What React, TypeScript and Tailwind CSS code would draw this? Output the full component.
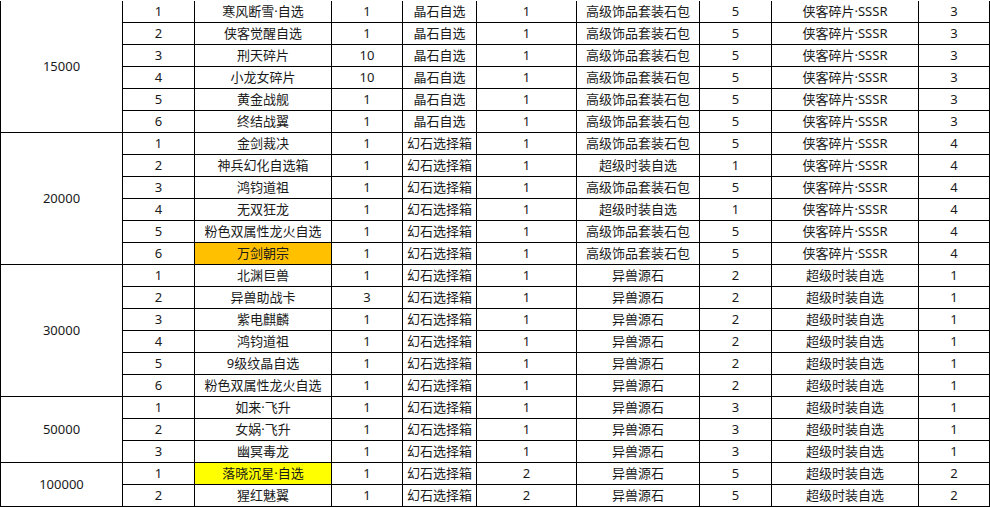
type Row = {
  no: number
  item: string
  qty: string
  a: string
  aq: string
  b: string
  bq: string
  c: string
  cq: string
  hl?: "orange" | "yellow"
}

type Group = { tier: string; rows: Row[] }

const r = (
  no: number,
  item: string,
  qty: string,
  a: string,
  aq: string,
  b: string,
  bq: string,
  c: string,
  cq: string,
  hl?: "orange" | "yellow",
): Row => ({ no, item, qty, a, aq, b, bq, c, cq, hl })

const groups: Group[] = [
  {
    tier: "15000",
    rows: [
      r(1, "寒风断雪·自选", "1", "晶石自选", "1", "高级饰品套装石包", "5", "侠客碎片·SSSR", "3"),
      r(2, "侠客觉醒自选", "1", "晶石自选", "1", "高级饰品套装石包", "5", "侠客碎片·SSSR", "3"),
      r(3, "刑天碎片", "10", "晶石自选", "1", "高级饰品套装石包", "5", "侠客碎片·SSSR", "3"),
      r(4, "小龙女碎片", "10", "晶石自选", "1", "高级饰品套装石包", "5", "侠客碎片·SSSR", "3"),
      r(5, "黄金战舰", "1", "晶石自选", "1", "高级饰品套装石包", "5", "侠客碎片·SSSR", "3"),
      r(6, "终结战翼", "1", "晶石自选", "1", "高级饰品套装石包", "5", "侠客碎片·SSSR", "3"),
    ],
  },
  {
    tier: "20000",
    rows: [
      r(1, "金剑裁决", "1", "幻石选择箱", "1", "高级饰品套装石包", "5", "侠客碎片·SSSR", "4"),
      r(2, "神兵幻化自选箱", "1", "幻石选择箱", "1", "超级时装自选", "1", "侠客碎片·SSSR", "4"),
      r(3, "鸿钧道祖", "1", "幻石选择箱", "1", "高级饰品套装石包", "5", "侠客碎片·SSSR", "4"),
      r(4, "无双狂龙", "1", "幻石选择箱", "1", "超级时装自选", "1", "侠客碎片·SSSR", "4"),
      r(5, "粉色双属性龙火自选", "1", "幻石选择箱", "1", "高级饰品套装石包", "5", "侠客碎片·SSSR", "4"),
      r(6, "万剑朝宗", "1", "幻石选择箱", "1", "高级饰品套装石包", "5", "侠客碎片·SSSR", "4", "orange"),
    ],
  },
  {
    tier: "30000",
    rows: [
      r(1, "北渊巨兽", "1", "幻石选择箱", "1", "异兽源石", "2", "超级时装自选", "1"),
      r(2, "异兽助战卡", "3", "幻石选择箱", "1", "异兽源石", "2", "超级时装自选", "1"),
      r(3, "紫电麒麟", "1", "幻石选择箱", "1", "异兽源石", "2", "超级时装自选", "1"),
      r(4, "鸿钧道祖", "1", "幻石选择箱", "1", "异兽源石", "2", "超级时装自选", "1"),
      r(5, "9级纹晶自选", "1", "幻石选择箱", "1", "异兽源石", "2", "超级时装自选", "1"),
      r(6, "粉色双属性龙火自选", "1", "幻石选择箱", "1", "异兽源石", "2", "超级时装自选", "1"),
    ],
  },
  {
    tier: "50000",
    rows: [
      r(1, "如来·飞升", "1", "幻石选择箱", "1", "异兽源石", "3", "超级时装自选", "1"),
      r(2, "女娲·飞升", "1", "幻石选择箱", "1", "异兽源石", "3", "超级时装自选", "1"),
      r(3, "幽冥毒龙", "1", "幻石选择箱", "1", "异兽源石", "3", "超级时装自选", "1"),
    ],
  },
  {
    tier: "100000",
    rows: [
      r(1, "落晓沉星·自选", "1", "幻石选择箱", "2", "异兽源石", "5", "超级时装自选", "2", "yellow"),
      r(2, "猩红魅翼", "1", "幻石选择箱", "2", "异兽源石", "5", "超级时装自选", "2"),
    ],
  },
]

const cell = "flex items-center justify-center whitespace-nowrap border-r border-b border-black"

const spans: Record<number, string> = {
  2: "row-span-2",
  3: "row-span-3",
  6: "row-span-6",
}

export default function App() {
  return (
    <div className="h-[507px] w-[990px] overflow-hidden bg-white pt-px">
      <div
        className="grid grid-cols-[122px_72px_137px_71px_74px_100px_123px_72px_147px_71px] auto-rows-[22px] border-l border-black text-[13px] leading-none text-[#1a1a1a]"
        style={{ fontFamily: '"Noto Sans", "Noto Sans CJK SC", sans-serif' }}
      >
        {groups.map((g) =>
          g.rows.map((row, i) => (
            <div key={`${g.tier}-${row.no}`} className="contents">
              {i === 0 ? <div className={`${cell} ${spans[g.rows.length]}`}>{g.tier}</div> : null}
              <div className={cell}>{row.no}</div>
              <div
                className={`${cell} ${
                  row.hl === "orange" ? "bg-[#ffc000]" : row.hl === "yellow" ? "bg-[#ffff00]" : ""
                }`}
              >
                {row.item}
              </div>
              <div className={cell}>{row.qty}</div>
              <div className={cell}>{row.a}</div>
              <div className={cell}>{row.aq}</div>
              <div className={cell}>{row.b}</div>
              <div className={cell}>{row.bq}</div>
              <div className={cell}>{row.c}</div>
              <div className={cell}>{row.cq}</div>
            </div>
          )),
        )}
      </div>
    </div>
  )
}
